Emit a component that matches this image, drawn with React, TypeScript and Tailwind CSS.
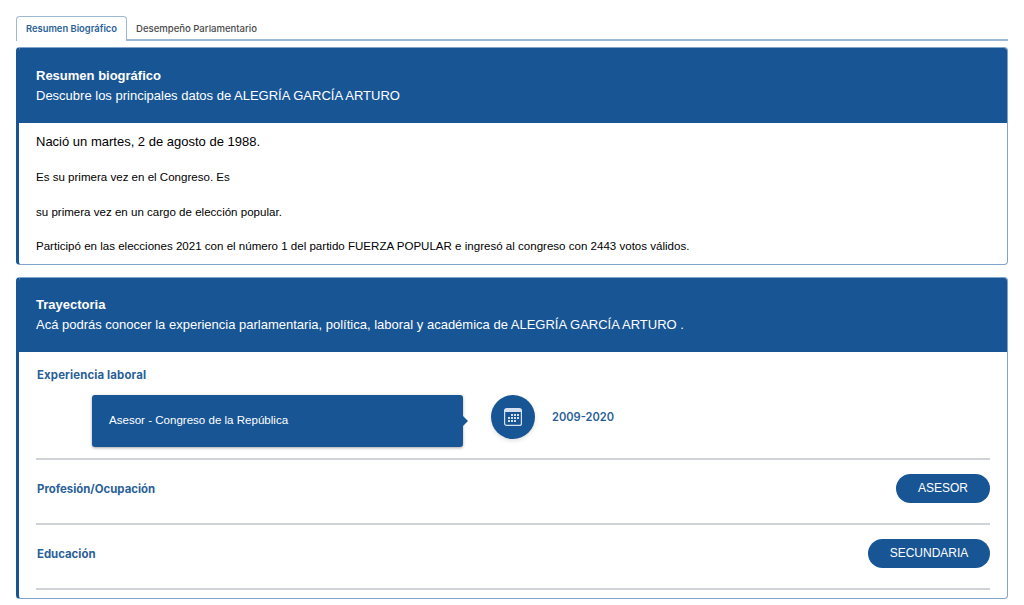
import React from 'react';

const arial = "font-['Liberation_Sans',Arial,sans-serif]";
const work = "font-['Inter',sans-serif]";

const CalendarIcon = () => (
  <svg width="18" height="18" viewBox="0 0 18 18" fill="none">
    <rect x="0.6" y="0.6" width="16.8" height="16.8" rx="2" stroke="#d5e1ee" strokeWidth="1.2" />
    <rect x="1" y="1" width="16" height="3" fill="#d5e1ee" />
    {[
      [7, 6], [10, 6], [13, 6],
      [4, 9], [7, 9], [10, 9], [13, 9],
      [4, 12], [7, 12], [10, 12],
    ].map(([x, y]) => (
      <rect key={`${x}-${y}`} x={x} y={y} width="2" height="2" fill="#d5e1ee" />
    ))}
  </svg>
);

const SectionHeader = ({ title, subtitle, className }: { title: string; subtitle: string; className: string }) => (
  <div className={`bg-[#185594] text-white pl-[17px] ${className} ${arial}`}>
    <h2 className="text-[13px] font-bold leading-[20px]">{title}</h2>
    <p className="text-[13px] leading-[20px]">{subtitle}</p>
  </div>
);

const InfoRow = ({ label, value, width }: { label: string; value: string; width: string }) => (
  <div className="flex items-center justify-between h-[65px] pb-[7px] border-b-2 border-[#cfd2d6]">
    <span className={`pl-[1px] pt-[4px] text-[11.4px] font-bold text-[#2a5f98] ${work}`}>{label}</span>
    <span className={`${width} h-[29px] rounded-full bg-[#185594] text-white text-[12px] flex items-center justify-center ${arial}`}>
      {value}
    </span>
  </div>
);

export default function App() {
  return (
    <div className="bg-white w-[1024px] h-[605px] overflow-hidden px-4 pt-4">
      <div className="flex h-[25px] border-b-2 border-[#9db8d6]">
        <div className={`w-[111px] h-[25px] pt-[1px] border border-b-0 border-[#9db8d6] rounded-t-[4px] bg-white text-[9.4px] font-semibold text-[#2a5f98] flex items-center justify-center ${work}`}>
          Resumen Biográfico
        </div>
        <div className={`pl-[9px] h-[24px] pt-[2px] text-[9.55px] font-medium text-[#4a4a4a] flex items-center ${work}`}>
          Desempeño Parlamentario
        </div>
      </div>

      <section className="mt-[6px] h-[218px] rounded-[4px] border border-[#7fa3c9] border-l-[3px] border-l-[#185594] overflow-hidden">
        <SectionHeader
          title="Resumen biográfico"
          subtitle="Descubre los principales datos de ALEGRÍA GARCÍA ARTURO"
          className="h-[75px] pt-[18px]"
        />
        <div className={`pl-[17px] text-black ${arial}`}>
          <p className="text-[13px] leading-[16px] mt-[11px]">Nació un martes, 2 de agosto de 1988.</p>
          <p className="text-[11.55px] leading-[14px] mt-[20px]">Es su primera vez en el Congreso. Es</p>
          <p className="text-[11.55px] leading-[14px] mt-[21px]">su primera vez en un cargo de elección popular.</p>
          <p className="text-[11.55px] leading-[14px] mt-[20px]">
            Participó en las elecciones 2021 con el número 1 del partido FUERZA POPULAR e ingresó al congreso con 2443 votos válidos.
          </p>
        </div>
      </section>

      <section className="mt-[12px] h-[322px] rounded-[4px] border border-[#7fa3c9] border-l-[3px] border-l-[#185594] overflow-hidden">
        <SectionHeader
          title="Trayectoria"
          subtitle="Acá podrás conocer la experiencia parlamentaria, política, laboral y académica de ALEGRÍA GARCÍA ARTURO ."
          className="h-[74px] pt-[17px]"
        />
        <div className="px-[17px]">
          <div className="h-[108px] border-b-2 border-[#cfd2d6]">
            <div className={`pt-[16px] pl-[1px] text-[11.4px] tracking-[0.15px] leading-[14px] font-bold text-[#2a5f98] ${work}`}>Experiencia laboral</div>
            <div className="flex items-start ml-[56px] mt-[13px]">
              <div className="relative w-[371px] h-[52px] rounded-[3px] bg-[#185594] shadow-[0_1px_3px_rgba(0,0,0,0.35)] flex items-center pl-[17px]">
                <span className={`text-white text-[11.55px] ${arial}`}>Asesor - Congreso de la República</span>
                <span className="absolute right-[-5px] top-1/2 -translate-y-1/2 border-y-[5px] border-y-transparent border-l-[5px] border-l-[#185594]" />
              </div>
              <div className="ml-[28px] w-[44px] h-[44px] rounded-full bg-[#185594] shadow-[0_2px_4px_rgba(0,0,0,0.12)] flex items-center justify-center">
                <CalendarIcon />
              </div>
              <span className={`ml-[17px] h-[44px] flex items-center text-[11.1px] font-semibold text-[#2a5f98] ${work}`}>2009-2020</span>
            </div>
          </div>
          <InfoRow label="Profesión/Ocupación" value="ASESOR" width="w-[94px]" />
          <InfoRow label="Educación" value="SECUNDARIA" width="w-[122px]" />
        </div>
      </section>
    </div>
  );
}
